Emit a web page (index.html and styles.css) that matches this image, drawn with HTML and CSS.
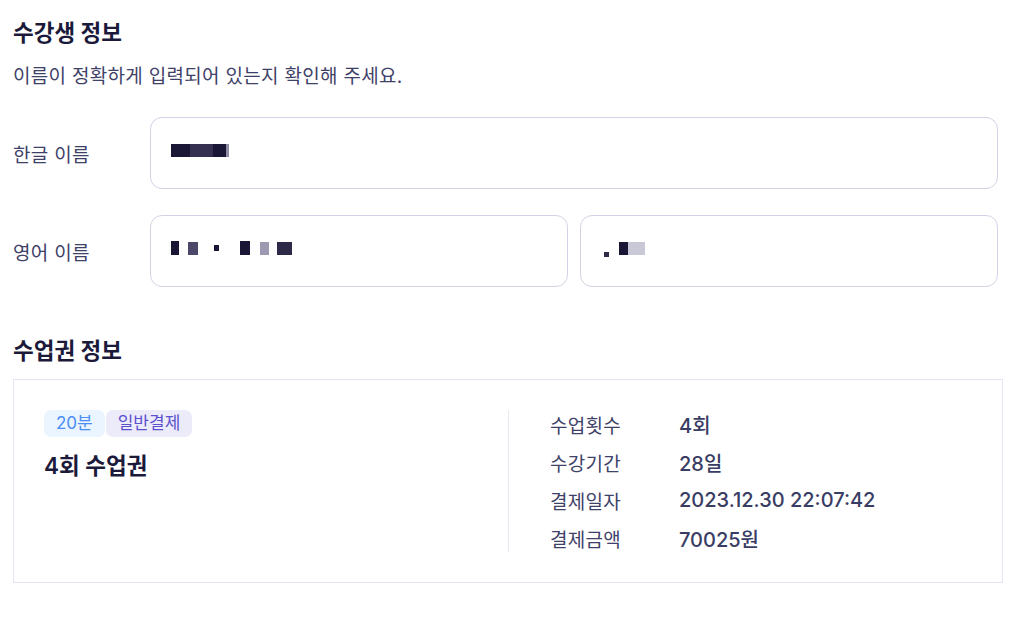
FILE: index.html
```html
<!DOCTYPE html>
<html lang="ko">
<head>
<meta charset="utf-8">
<link rel="stylesheet" href="styles.css">
</head>
<body>
<main class="page">
  <section class="student">
    <h2 class="section-title">수강생 정보</h2>
    <p class="section-desc">이름이 정확하게 입력되어 있는지 확인해 주세요.</p>
    <div class="field-row">
      <label class="field-label">한글 이름</label>
      <div class="field-inputs">
        <div class="input">
          <span class="redact r1"></span>
        </div>
      </div>
    </div>
    <div class="field-row">
      <label class="field-label">영어 이름</label>
      <div class="field-inputs">
        <div class="input">
          <span class="redact r2a"></span><span class="redact r2b"></span><span class="redact r2c"></span><span class="redact r2d"></span><span class="redact r2e"></span><span class="redact r2f"></span>
        </div>
        <div class="input">
          <span class="redact r3a"></span><span class="redact r3b"></span><span class="redact r3c"></span>
        </div>
      </div>
    </div>
  </section>

  <section class="ticket">
    <h2 class="section-title">수업권 정보</h2>
    <div class="card">
      <div class="card-left">
        <div class="tags">
          <span class="tag tag-blue">20분</span>
          <span class="tag tag-purple">일반결제</span>
        </div>
        <div class="ticket-name">4회 수업권</div>
      </div>
      <dl class="card-right">
        <div class="info-row"><dt>수업횟수</dt><dd>4회</dd></div>
        <div class="info-row"><dt>수강기간</dt><dd>28일</dd></div>
        <div class="info-row"><dt>결제일자</dt><dd>2023.12.30 22:07:42</dd></div>
        <div class="info-row"><dt>결제금액</dt><dd>70025원</dd></div>
      </dl>
    </div>
  </section>
</main>
</body>
</html>
```

FILE: styles.css
```css
* { box-sizing: border-box; }
html, body { margin: 0; padding: 0; background: #ffffff; }
body {
  font-family: "Inter", "Noto Sans CJK KR", "Noto Sans", sans-serif;
  color: #3a3d63;
}
.page {
  width: 1024px;
  padding: 17px 21px 0 13px;
}
.section-title {
  margin: 0;
  font-size: 22.5px;
  line-height: 32px;
  font-weight: 700;
  color: #1b1a3b;
}
.section-desc {
  margin: 15px 0 0;
  font-size: 19px;
  line-height: 26px;
  color: #3e4168;
  letter-spacing: 0.3px;
}
.field-row {
  display: flex;
  align-items: center;
  margin-top: 27px;
  padding-right: 5px;
}
.field-row + .field-row { margin-top: 26px; }
.field-label {
  width: 137px;
  flex: none;
  font-size: 19px;
  color: #3e4168;
  letter-spacing: 0.3px;
}
.field-inputs {
  flex: 1;
  display: flex;
  gap: 12px;
}
.input {
  flex: 1;
  height: 72px;
  border: 1px solid #d3d2e6;
  border-radius: 12px;
  display: flex;
  align-items: center;
  padding-left: 20px;
}
.redact { display: inline-block; height: 13px; background: #1a1636; margin-top: -6px; }
.r1 { width: 58px; background: linear-gradient(90deg, #1a1636 0 19px, #35304f 19px 42px, #1a1636 42px 55px, #8e8ba5 55px); }
.r2a { width: 8px; height: 14px; }
.r2b { width: 10px; margin-left: 9px; background: #4b4869; }
.r2c { width: 5px; height: 6px; margin-left: 16px; background: #1a1636; }
.r2d { width: 10px; height: 14px; margin-left: 21px; }
.r2e { width: 9px; margin-left: 10px; background: #9c99b0; }
.r2f { width: 15px; margin-left: 8px; background: #2d2a48; }
.r3a { width: 5px; height: 5px; margin-left: 3px; background: #2e2b48; margin-top: 6px; }
.r3b { width: 9px; margin-left: 10px; background: #1a1636; }
.r3c { width: 17px; margin-left: 0; background: #c9c8d6; }

.ticket { margin-top: 48px; }
.card {
  margin-top: 12px;
  border: 1px solid #e5e5f1;
  padding: 30px 0 30px 30px;
  display: flex;
}
.card-left {
  width: 465px;
  flex: none;
  border-right: 1px solid #e8e8f1;
}
.tags { display: flex; gap: 1px; }
.tag {
  height: 27px;
  line-height: 27px;
  padding: 0 12px;
  border-radius: 7px;
  font-size: 17px;
}
.tag-blue { background: #eaf5ff; color: #4a8df4; }
.tag-purple { background: #ecebf9; color: #5b50cf; }
.ticket-name {
  margin-top: 14px;
  font-size: 22.5px;
  line-height: 30px;
  font-weight: 600;
  color: #1b1a3b;
}
.card-right {
  margin: 0;
  padding-left: 41px;
  display: flex;
  flex-direction: column;
  gap: 10px;
}
.info-row {
  display: flex;
  height: 28px;
  align-items: center;
  font-size: 19px;
}
.info-row dt { width: 129px; color: #3e4168; letter-spacing: 0.3px; }
.info-row dd { margin: 0; font-weight: 500; color: #3a3d63; font-size: 20px; }
```
